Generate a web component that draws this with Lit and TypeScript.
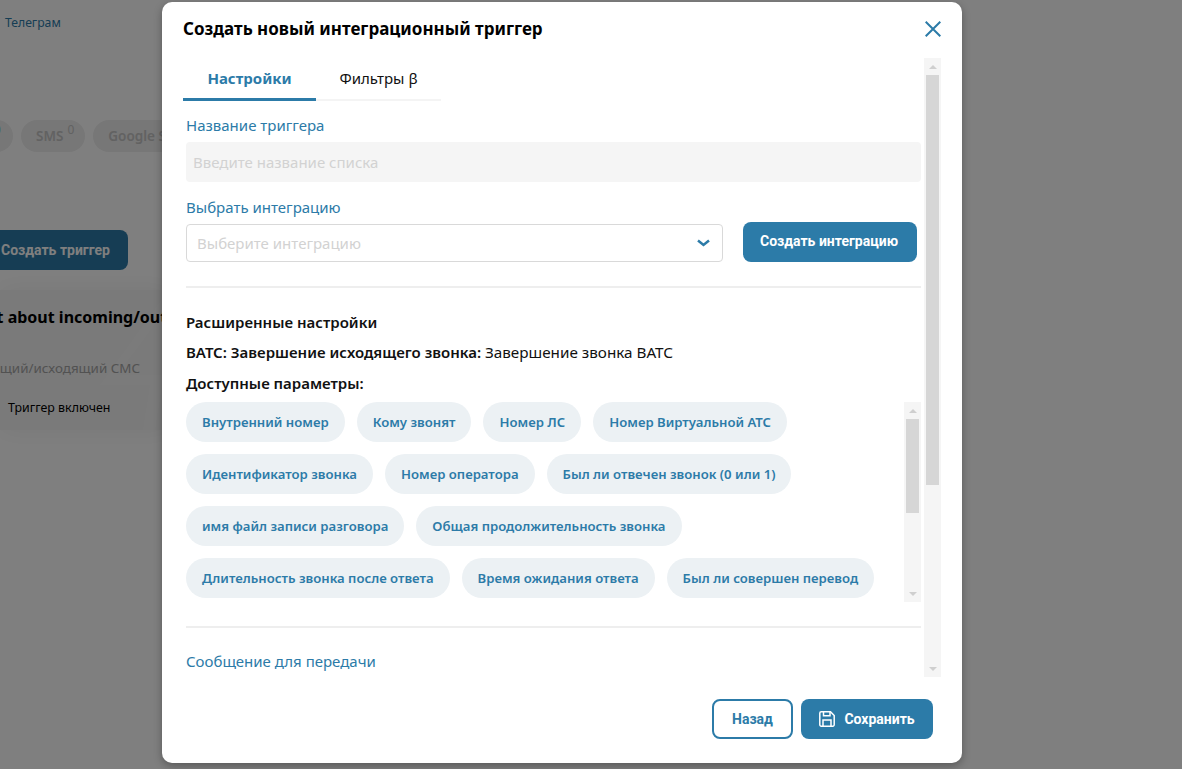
import { LitElement, html, css } from "lit";
import { customElement } from "lit/decorators.js";

const rows = [
  ["Внутренний номер", "Кому звонят", "Номер ЛС", "Номер Виртуальной АТС"],
  ["Идентификатор звонка", "Номер оператора", "Был ли отвечен звонок (0 или 1)"],
  ["имя файл записи разговора", "Общая продолжительность звонка"],
  ["Длительность звонка после ответа", "Время ожидания ответа", "Был ли совершен перевод"],
].flat();

@customElement("app-root")
export class AppRoot extends LitElement {
  static styles = css`
    :host { display: block; width: 1182px; height: 769px; overflow: hidden; position: relative; background: #fff; font-family: "Noto Sans", sans-serif; color: #000; }
    * { box-sizing: border-box; }

    .page { width: 1182px; height: 769px; display: flex; flex-direction: column; overflow: hidden; }
    .crumb { padding: 15px 0 0 5px; height: 120px; font-size: 12.2px; line-height: 16px; color: #2c7ba8; }
    .chans { display: flex; gap: 8px; margin-left: -20px; height: 110px; align-items: flex-start; }
    .chan { height: 32px; border-radius: 16px; background: #eee; color: #c4c4c4; font-size: 13.5px; font-weight: 600; line-height: 33px; padding: 0 11px 0 15px; white-space: nowrap; }
    .chan sup { font-size: 12px; font-weight: 400; line-height: 0; vertical-align: 7px; margin-left: 4px; }
    .chan.first { width: 33px; padding: 0 0 0 10px; color: #7fd0c0; overflow: hidden; }
    .make { width: 128px; height: 40px; border-radius: 0 8px 8px 0; background: #2c7ba8; color: #fff; font: 700 14px/40px Roboto, sans-serif; padding-left: 1px; flex: none; }
    .card { position: relative; margin-top: 20px; width: 170px; height: 140px; background: #f4f4f4; box-shadow: 0 0 24px rgba(0,0,0,.06); overflow: hidden; white-space: nowrap; padding-top: 15px; }
    .card h3, .card p, .card span { position: relative; }
    .mark { position: absolute; left: 95px; top: 0; width: 75px; height: 140px; fill: #f7f7f7; }
    .card h3 { margin: 0 0 0 -36px; font-size: 16px; line-height: 24px; font-weight: 700; }
    .card p { margin: 29px 0 0 -39px; font-size: 13.4px; line-height: 20px; color: #a4a4a4; }
    .card span { display: block; margin: 22px 0 0 8px; font-size: 12.4px; line-height: 16px; color: #000; }

    .overlay { position: absolute; inset: 0; background: rgba(0,0,0,.5); display: flex; align-items: flex-start; padding: 2px 0 0 162px; }
    .modal { width: 800px; height: 761px; background: #fff; border-radius: 10px; box-shadow: 0 3px 8px rgba(0,0,0,.3); display: flex; flex-direction: column; padding: 0 21px; }
    .head { height: 56px; padding-bottom: 2px; display: flex; align-items: center; justify-content: space-between; flex: none; }
    .head h2 { margin: 0; font-size: 17px; font-weight: 700; line-height: 24px; }
    .x { display: block; width: 16px; height: 16px; }

    .main { display: flex; height: 619px; flex: none; width: 758px; }
    .scroll { flex: none; width: 741px; overflow: hidden; height: 619px; }
    .tabs { display: flex; width: 258px; height: 43px; border-bottom: 2px solid #f4f4f4; }
    .tab { height: 43px; font-size: 15px; line-height: 40px; text-align: center; flex: none; }
    .tab.on { width: 133px; color: #2c7ba8; font-weight: 700; border-bottom: 3px solid #2c7ba8; }
    .tab.off { width: 125px; color: #111; }

    .form { padding-left: 3px; width: 738px; }
    .lab { display: block; font-size: 15px; line-height: 20px; color: #2c7ba8; }
    .first-lab { margin-top: 14px; }
    .input { height: 40px; margin-top: 7px; background: #f5f5f5; border-radius: 4px; padding-left: 7px; font-size: 15px; line-height: 40px; color: #d2d2d2; }
    .lab2 { margin-top: 15px; }
    .pick { display: flex; justify-content: space-between; align-items: flex-end; margin-top: 5px; padding-right: 4px; height: 40px; }
    .select { width: 537px; height: 38px; border: 1px solid #d9d9d9; border-radius: 4px; display: flex; align-items: center; justify-content: space-between; padding: 0 12px 0 10px; font-size: 15px; color: #d2d2d2; }
    .btn { border: 0; background: #2c7ba8; color: #fff; border-radius: 8px; height: 40px; font: 700 14px/40px Roboto, sans-serif; display: flex; align-items: center; justify-content: center; }
    .pick .btn { width: 174px; padding: 0 2px 2px 0; }
    .rule { height: 2px; background: #eee; }
    .pick + .rule { margin-top: 24px; }
    .h { font-size: 15px; font-weight: 600; line-height: 20px; color: #111; }
    .adv { margin-top: 24px; }
    .line { margin-top: 10px; white-space: nowrap; }
    .line span { font-weight: 400; font-size: 15.25px; }
    .line.l3 { margin-top: 11px; }

    .params { display: flex; height: 200px; margin-top: 9px; }
    .pills { width: 718px; display: flex; flex-wrap: wrap; gap: 12px; align-content: flex-start; }
    .pill { height: 40px; border-radius: 20px; background: #ecf1f4; color: #2c7ba8; font-size: 13.15px; font-weight: 600; line-height: 40px; padding: 0 16px; white-space: nowrap; }
    .params + .rule { margin-top: 24px; }
    .last { margin-top: 23px; }

    .bar { flex: none; width: 17px; background: #f5f5f5; display: flex; flex-direction: column; align-items: center; }
    .arrow { flex: none; width: 17px; height: 17px; display: flex; align-items: center; justify-content: center; }
    .arrow i { display: block; width: 0; height: 0; border-left: 4px solid transparent; border-right: 4px solid transparent; }
    .arrow.up i { border-bottom: 4px solid #cfcfcf; }
    .arrow.down i { border-top: 4px solid #cfcfcf; }
    .thumb { flex: none; width: 13px; background: #d6d6d6; }
    .fill { flex: 1; }
    .outer-bar { height: 619px; }
    .inner-bar { height: 200px; }

    .foot { display: flex; justify-content: flex-end; gap: 8px; margin-top: 22px; padding-right: 8px; width: 758px; }
    .back { width: 81px; background: #fff; color: #2c7ba8; border: 2px solid #2c7ba8; line-height: 36px; }
    .save { width: 132px; gap: 9px; }
  `;

  render() {
    return html`
      <div class="page">
        <div class="crumb">Телеграм</div>
        <div class="chans">
          <div class="chan first"><sup>0</sup></div>
          <div class="chan">SMS<sup>0</sup></div>
          <div class="chan">Google Sheets</div>
        </div>
        <div class="make">Создать триггер</div>
        <div class="card">
          <svg class="mark" viewBox="0 0 75 140"><path d="M68 8L5 95h50l-7 45h12l7-45h8V85H22L75 14z"/></svg>
          <h3>Alert about incoming/outgoing</h3>
          <p>Входящий/исходящий СМС</p>
          <span>Триггер включен</span>
        </div>
      </div>
      <div class="overlay">
        <div class="modal">
          <div class="head">
            <h2>Создать новый интеграционный триггер</h2>
            <svg class="x" viewBox="0 0 16 16" fill="none" stroke="#2c7ba8" stroke-width="2"><path d="M.7.7l14.6 14.6M15.3.7L.7 15.300"/></svg>
          </div>
          <div class="main">
            <div class="scroll">
              <div class="tabs">
                <div class="tab on">Настройки</div>
                <div class="tab off">Фильтры β</div>
              </div>
              <div class="form">
                <div class="lab first-lab">Название триггера</div>
                <div class="input">Введите название списка</div>
                <div class="lab lab2">Выбрать интеграцию</div>
                <div class="pick">
                  <div class="select">Выберите интеграцию
                    <svg width="13" height="8" viewBox="0 0 13 8" fill="none" stroke="#2c7ba8" stroke-width="2.500"><path d="M1 1.500l5.500 4.500 5.500-4.500"/></svg>
                  </div>
                  <div class="btn">Создать интеграцию</div>
                </div>
                <div class="rule"></div>
                <div class="h adv">Расширенные настройки</div>
                <div class="h line">ВАТС: Завершение исходящего звонка: <span>Завершение звонка ВАТС</span></div>
                <div class="h line l3">Доступные параметры:</div>
                <div class="params">
                  <div class="pills">${rows.map((r) => html`<div class="pill">${r}</div>`)}</div>
                  <div class="bar inner-bar">
                    <div class="arrow up"><i></i></div>
                    <div class="thumb" style="height:94px"></div>
                    <div class="fill"></div>
                    <div class="arrow down"><i></i></div>
                  </div>
                </div>
                <div class="rule"></div>
                <div class="lab last">Сообщение для передачи</div>
              </div>
            </div>
            <div class="bar outer-bar">
              <div class="arrow up"><i></i></div>
              <div class="thumb" style="height:410px"></div>
              <div class="fill"></div>
              <div class="arrow down"><i></i></div>
            </div>
          </div>
          <div class="foot">
            <div class="btn back">Назад</div>
            <div class="btn save">
              <svg width="16" height="16" viewBox="0 0 16 16" fill="none" stroke="#fff" stroke-width="1.500"><path d="M2.200.8h9.300l3.700 3.700v9.300a1.400 1.400 0 0 1-1.400 1.400H2.200A1.400 1.400 0 0 1 .8 13.800V2.200A1.400 1.400 0 0 1 2.200.8z"/><path d="M4.500.8v4h6.500v-4M4 15.200V9h8v6.200"/></svg>
              Сохранить
            </div>
          </div>
        </div>
      </div>
    `;
  }
}
